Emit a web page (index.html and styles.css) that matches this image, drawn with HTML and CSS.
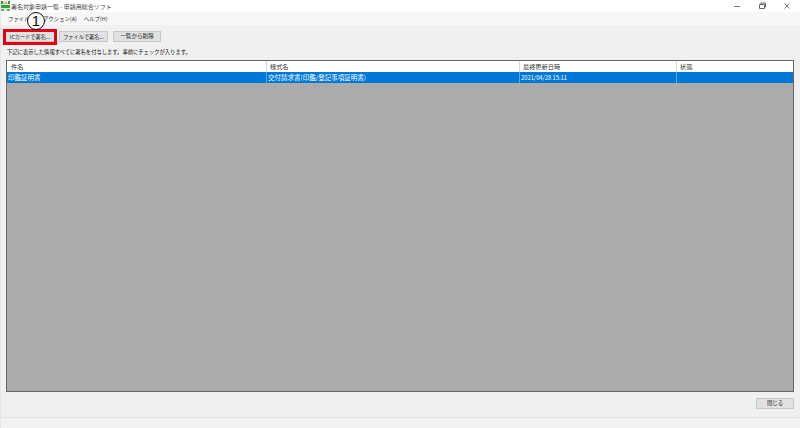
FILE: index.html
```html
<!DOCTYPE html>
<html lang="ja">
<head>
    <meta charset="UTF-8">
    <title>署名対象申請一覧 - 申請用総合ソフト</title>
    <link rel="stylesheet" href="styles.css">
</head>
<body>
    <div class="window">
        <div class="titlebar">
            <svg class="app-icon" width="9" height="10" viewBox="0 0 9 10">
                <rect x="0" y="0" width="9" height="10" fill="#f6dcc4"/>
                <rect x="0" y="0" width="2" height="3" fill="#2e9e4f"/>
                <rect x="7" y="0" width="2" height="3" fill="#2e9e4f"/>
                <rect x="3" y="1" width="3" height="2" fill="#e8a98c"/>
                <rect x="0" y="4" width="9" height="3" fill="#2e9e4f"/>
                <rect x="0" y="8" width="3" height="2" fill="#5cb56f"/>
                <rect x="6" y="8" width="3" height="2" fill="#5cb56f"/>
            </svg>
            <span class="title">署名対象申請一覧 - 申請用総合ソフト</span>
            <div class="win-buttons">
                <svg width="8" height="8" viewBox="0 0 8 8"><path d="M1 4.5H7" stroke="#777" fill="none"/></svg>
                <svg width="8" height="8" viewBox="0 0 8 8"><path d="M1.5 2.5H6.5V6.5H1.5ZM3 2.5V1H7.5V5H6.5" stroke="#666" fill="none"/></svg>
                <svg width="8" height="8" viewBox="0 0 8 8"><path d="M1.5 1.5L6.5 6.5M6.5 1.5L1.5 6.5" stroke="#777" fill="none"/></svg>
            </div>
        </div>
        <div class="menubar">
            <span>ファイル(F)</span>
            <span>アクション(A)</span>
            <span>ヘルプ(H)</span>
        </div>
        <div class="toolbar">
            <button class="btn btn-first">ICカードで署名...</button>
            <button class="btn btn-second">ファイルで署名...</button>
            <button class="btn btn-third">一覧から削除</button>
        </div>
        <p class="hint">下記に表示した情報すべてに署名を付与します。事前にチェックが入ります。</p>
        <div class="grid">
            <div class="row row-head">
                <div class="cell col-name">件名</div>
                <div class="cell col-form">様式名</div>
                <div class="cell col-date">最終更新日時</div>
                <div class="cell col-state">状態</div>
            </div>
            <div class="row row-selected">
                <div class="cell col-name">印鑑証明書</div>
                <div class="cell col-form">交付請求書(印鑑/登記事項証明書)</div>
                <div class="cell col-date">2021/04/28 15:11</div>
                <div class="cell col-state"></div>
            </div>
        </div>
        <div class="footer">
            <button class="btn btn-close">閉じる</button>
        </div>
        <div class="statusbar"></div>
        <div class="callout-box"></div>
        <div class="callout-num">1</div>
    </div>
</body>
</html>
```

FILE: styles.css
```css
body {
    margin: 0;
    background: #f0f0f0;
    color: #222;
    font-family: "Noto Sans CJK JP", "Noto Sans", sans-serif;
    font-size: 6.5px;
}

.window {
    position: relative;
    display: flex;
    flex-direction: column;
    width: 800px;
    height: 428px;
    overflow: hidden;
    box-sizing: border-box;
    border-left: 1px solid #e6e6e6;
}

.titlebar {
    display: flex;
    align-items: center;
    height: 12px;
    background: #fff;
    flex: none;
}

.app-icon {
    margin-right: 1px;
}

.title {
    color: #444;
    font-size: 6px;
}

.win-buttons {
    display: flex;
    gap: 17px;
    margin-left: auto;
    margin-right: 9px;
}

.menubar {
    display: flex;
    gap: 7px;
    align-items: center;
    height: 13px;
    padding-left: 7px;
    background: #f7f7f7;
    color: #333;
    font-size: 5.4px;
    flex: none;
}

.toolbar {
    display: flex;
    gap: 4px;
    padding: 6px 0 0 4px;
    height: 11px;
    flex: none;
}

.btn {
    height: 11px;
    padding: 0;
    border: 1px solid #c8c8c8;
    background: #e1e1e1;
    color: #222;
    font-family: inherit;
    font-size: 5.2px;
    line-height: 9px;
    white-space: nowrap;
}

.btn-first { width: 50px; }
.btn-second { width: 49px; }
.btn-third { width: 48px; margin-left: 1px; font-size: 5.6px; }
.btn-close { width: 38px; font-size: 5.4px; }

.hint {
    margin: 6px 0 0 6px;
    height: 9px;
    line-height: 9px;
    font-size: 5.3px;
    color: #111;
    flex: none;
}

.grid {
    flex: none;
    height: 332px;
    margin: 3px 6px 0 5px;
    box-sizing: border-box;
    border: 1px solid #666;
    background: #ababab;
}

.row {
    display: flex;
    height: 11px;
}

.row-head {
    background: #fff;
    color: #333;
    font-size: 6.2px;
}

.row-head .cell {
    padding-left: 3px;
}

.row-head .col-name {
    padding-left: 4px;
}

.row-selected {
    background: #0078d7;
    color: #fff;
}

.cell {
    box-sizing: border-box;
    padding-left: 1px;
    line-height: 11px;
    border-right: 1px solid #d8d8d8;
    white-space: nowrap;
    overflow: hidden;
}

.row-selected .cell {
    border-right-color: #5aa6e4;
}

.row-selected .col-date {
    font-size: 5.8px;
}

.col-name { width: 260px; }
.col-form { width: 253px; }
.col-date { width: 157px; }
.col-state { flex: 1; border-right: none; }

.footer {
    display: flex;
    justify-content: flex-end;
    padding: 6px 6px 0 0;
    height: 19px;
    flex: none;
}

.statusbar {
    flex: 1;
    border-top: 1px solid #e2e2e2;
    background: #f1f1f1;
}

/* red frame and number laid over the screenshot */
.callout-box {
    position: absolute;
    left: 2px;
    top: 29px;
    width: 48px;
    height: 10px;
    border: 3px solid #e60012;
}

.callout-num {
    position: absolute;
    left: 26px;
    top: 12px;
    width: 18px;
    height: 18px;
    box-sizing: border-box;
    border: 1px solid #111;
    border-radius: 50%;
    background: #f7f7f7;
    color: #111;
    font-family: "Liberation Sans", sans-serif;
    font-size: 15px;
    line-height: 16px;
    text-align: center;
}
```
